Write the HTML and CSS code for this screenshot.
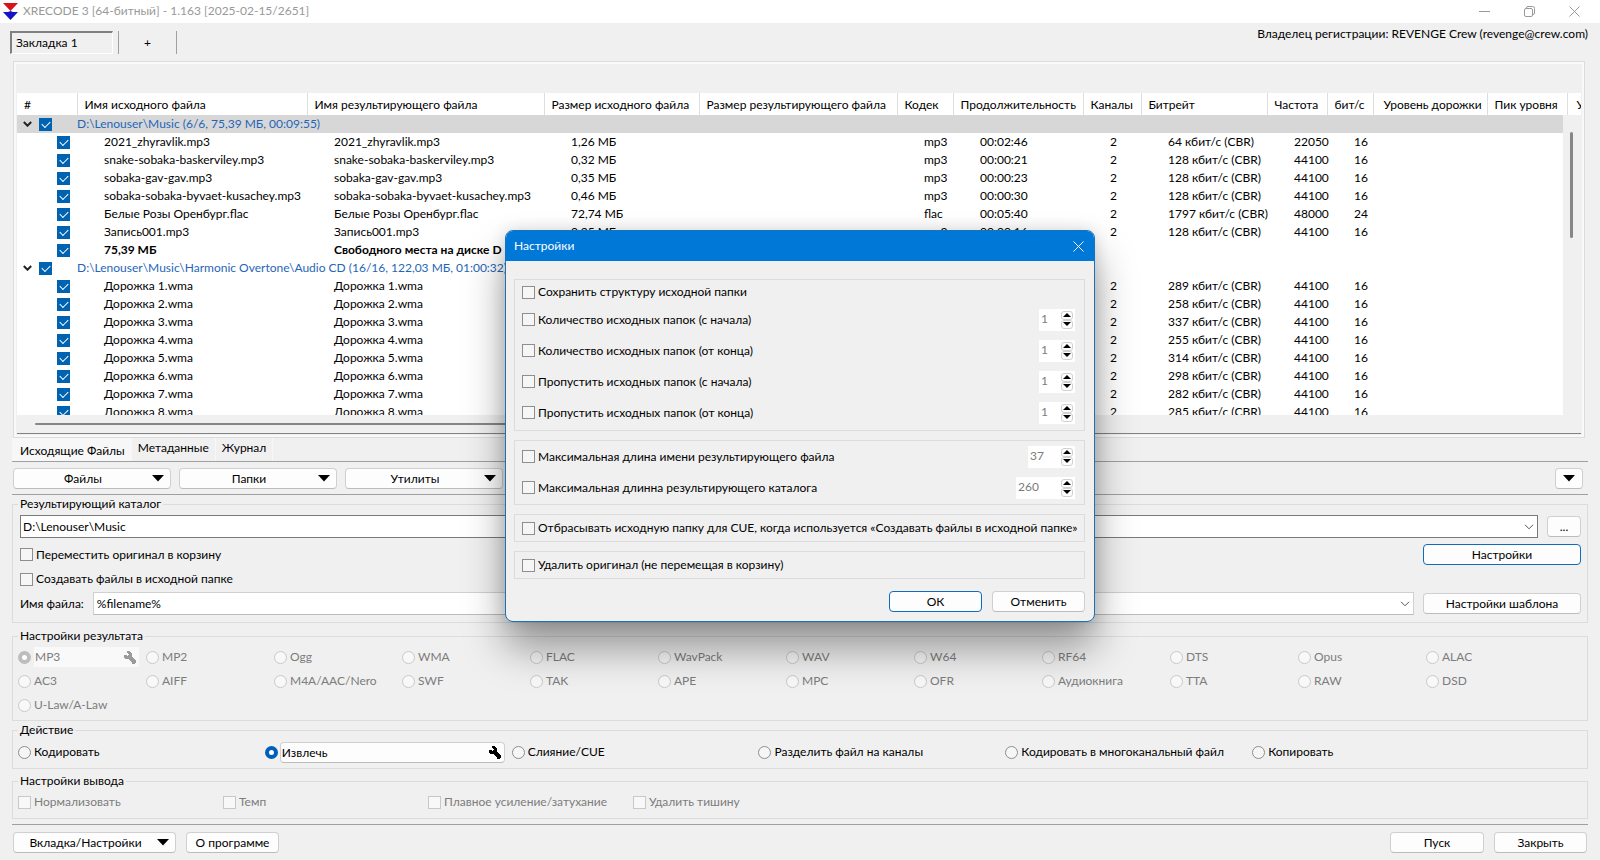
FILE: index.html
```html
<!DOCTYPE html>
<html lang="ru">
<head>
<meta charset="utf-8">
<title>XRECODE 3</title>
<link rel="stylesheet" href="styles.css">
</head>
<body>
<svg class="sprite" aria-hidden="true">
  <symbol id="wrench" viewBox="0 0 14 14"><path d="M4 1h3v1h1v1h1v4h1v1h1v1h1v1h1v3h-1v1h-3v-1H9v-1H8v-1H7v-1H6V9H2V8H1V5h3v1h1V5h1V4H5V3H4z" fill="currentColor"/></symbol>
  <symbol id="chevron" viewBox="0 0 10 6"><path d="M1 .8 5 4.8 9 .8" fill="none" stroke="currentColor" stroke-width="1"/></symbol>
  <symbol id="down" viewBox="0 0 12 7"><path d="M0 0h12L6 6.5z" fill="currentColor"/></symbol>
  <symbol id="small-up" viewBox="0 0 8 4"><path d="M0 4h8L4 0z" fill="currentColor"/></symbol>
  <symbol id="small-down" viewBox="0 0 8 4"><path d="M0 0h8L4 4z" fill="currentColor"/></symbol>
  <symbol id="cross" viewBox="0 0 11 11"><path d="M.5.5l10 10M10.500.5l-10 10" fill="none" stroke="currentColor"/></symbol>
</svg>
<div class="app">
  <header class="titlebar">
    <svg class="logo" viewBox="0 0 15 17"><path d="M0 0h15L7.500 8z" fill="#d8121c"/><path d="M0 9h5L7.500 8 10 9h5L7.500 17z" fill="#1414c8"/></svg>
    <span class="titlebar-text">XRECODE 3 [64-битный] - 1.163 [2025-02-15/2651]</span>
    <div class="window-buttons">
      <button class="plain" aria-label="Свернуть"><svg width="11" height="11"><path d="M0 5.500h11" stroke="currentColor"/></svg></button>
      <button class="plain" aria-label="Развернуть"><svg width="11" height="11" fill="none" stroke="currentColor"><rect x=".5" y="2.500" width="8" height="8" rx="1.500"/><path d="M2.500 2.500V2A1.500 1.500 0 0 1 4 .5h4.500a2 2 0 0 1 2 2V7A1.500 1.500 0 0 1 9 8.500"/></svg></button>
      <button class="plain" aria-label="Закрыть окно"><svg width="11" height="11"><use href="#cross"/></svg></button>
    </div>
  </header>

  <div class="sessions">
    <button class="session">Закладка 1</button>
    <button class="session-add">+</button>
    <span class="owner">Владелец регистрации: REVENGE Crew (revenge@crew.com)</span>
  </div>

  <main class="panel">
    <div class="list">
      <table class="files">
        <colgroup>
          <col class="w-num"><col class="w-src"><col class="w-dst"><col class="w-size"><col class="w-rsize"><col class="w-codec"><col class="w-dur"><col class="w-chan"><col class="w-rate"><col class="w-freq"><col class="w-bits"><col class="w-level"><col class="w-peak"><col>
        </colgroup>
        <thead>
          <tr><th>#</th><th>Имя исходного файла</th><th>Имя результирующего файла</th><th>Размер исходного файла</th><th>Размер результирующего файла</th><th>Кодек</th><th>Продолжительность</th><th>Каналы</th><th>Битрейт</th><th>Частота</th><th>бит/с</th><th class="level">Уровень дорожки</th><th>Пик уровня</th><th>У</th></tr>
        </thead>
        <tbody id="rows"></tbody>
      </table>
      <div class="vscroll"><div class="vthumb"></div></div>
      <div class="hscroll"><div class="hthumb"></div></div>
    </div>
  </main>

  <nav class="tabs">
    <button class="tab tab-on">Исходящие Файлы</button>
    <button class="tab">Метаданные</button>
    <button class="tab">Журнал</button>
  </nav>

  <div class="toolbar">
    <button class="btn menu"><span>Файлы</span><svg class="down"><use href="#down"/></svg></button>
    <button class="btn menu"><span>Папки</span><svg class="down"><use href="#down"/></svg></button>
    <button class="btn menu"><span>Утилиты</span><svg class="down"><use href="#down"/></svg></button>
    <button class="btn more" aria-label="Ещё"><svg class="down"><use href="#down"/></svg></button>
  </div>

  <fieldset class="group target">
    <legend>Результирующий каталог</legend>
    <div class="line">
      <div class="combo combo-dark">
        <select aria-label="Результирующий каталог"><option>D:\Lenouser\Music</option></select>
        <svg class="chevron"><use href="#chevron"/></svg>
      </div>
      <button class="btn browse">...</button>
    </div>
    <div class="line line-move">
      <label class="opt"><input type="checkbox">Переместить оригинал в корзину</label>
      <button class="btn btn-side btn-focus">Настройки</button>
    </div>
    <div class="line line-create"><label class="opt"><input type="checkbox">Создавать файлы в исходной папке</label></div>
    <div class="line line-name">
      <label for="pattern">Имя файла:</label>
      <div class="combo">
        <select id="pattern"><option>%filename%</option></select>
        <svg class="chevron"><use href="#chevron"/></svg>
      </div>
      <button class="btn btn-side">Настройки шаблона</button>
    </div>
  </fieldset>

  <fieldset class="group formats-group">
    <legend>Настройки результата</legend>
    <div class="formats">
      <div class="choice">
        <label class="opt off"><input type="radio" name="format" checked disabled><span class="box-text">MP3</span></label>
        <button class="tool off" disabled aria-label="Настройки MP3"><svg class="wrench"><use href="#wrench"/></svg></button>
      </div>
      <label class="opt off"><input type="radio" name="format" disabled>MP2</label>
      <label class="opt off"><input type="radio" name="format" disabled>Ogg</label>
      <label class="opt off"><input type="radio" name="format" disabled>WMA</label>
      <label class="opt off"><input type="radio" name="format" disabled>FLAC</label>
      <label class="opt off"><input type="radio" name="format" disabled>WavPack</label>
      <label class="opt off"><input type="radio" name="format" disabled>WAV</label>
      <label class="opt off"><input type="radio" name="format" disabled>W64</label>
      <label class="opt off"><input type="radio" name="format" disabled>RF64</label>
      <label class="opt off"><input type="radio" name="format" disabled>DTS</label>
      <label class="opt off"><input type="radio" name="format" disabled>Opus</label>
      <label class="opt off"><input type="radio" name="format" disabled>ALAC</label>
      <label class="opt off"><input type="radio" name="format" disabled>AC3</label>
      <label class="opt off"><input type="radio" name="format" disabled>AIFF</label>
      <label class="opt off"><input type="radio" name="format" disabled>M4A/AAC/Nero</label>
      <label class="opt off"><input type="radio" name="format" disabled>SWF</label>
      <label class="opt off"><input type="radio" name="format" disabled>TAK</label>
      <label class="opt off"><input type="radio" name="format" disabled>APE</label>
      <label class="opt off"><input type="radio" name="format" disabled>MPC</label>
      <label class="opt off"><input type="radio" name="format" disabled>OFR</label>
      <label class="opt off"><input type="radio" name="format" disabled>Аудиокнига</label>
      <label class="opt off"><input type="radio" name="format" disabled>TTA</label>
      <label class="opt off"><input type="radio" name="format" disabled>RAW</label>
      <label class="opt off"><input type="radio" name="format" disabled>DSD</label>
      <label class="opt off"><input type="radio" name="format" disabled>U-Law/A-Law</label>
    </div>
  </fieldset>

  <fieldset class="group actions-group">
    <legend>Действие</legend>
    <div class="actions">
      <label class="opt"><input type="radio" name="action">Кодировать</label>
      <div class="choice choice-on">
        <label class="opt"><input type="radio" name="action" checked><span class="box-text">Извлечь</span></label>
        <button class="tool" aria-label="Настройки извлечения"><svg class="wrench"><use href="#wrench"/></svg></button>
      </div>
      <label class="opt"><input type="radio" name="action">Слияние/CUE</label>
      <label class="opt"><input type="radio" name="action">Разделить файл на каналы</label>
      <label class="opt"><input type="radio" name="action">Кодировать в многоканальный файл</label>
      <label class="opt"><input type="radio" name="action">Копировать</label>
    </div>
  </fieldset>

  <fieldset class="group output-group">
    <legend>Настройки вывода</legend>
    <div class="outputs">
      <label class="opt off"><input type="checkbox" disabled>Нормализовать</label>
      <label class="opt off"><input type="checkbox" disabled>Темп</label>
      <label class="opt off"><input type="checkbox" disabled>Плавное усиление/затухание</label>
      <label class="opt off"><input type="checkbox" disabled>Удалить тишину</label>
    </div>
  </fieldset>

  <footer class="footer">
    <button class="btn menu menu-wide"><span>Вкладка/Настройки</span><svg class="down"><use href="#down"/></svg></button>
    <button class="btn about">О программе</button>
    <button class="btn start">Пуск</button>
    <button class="btn close">Закрыть</button>
  </footer>
</div>

<section class="dialog" role="dialog" aria-labelledby="dialog-title">
  <header class="dialog-head">
    <span id="dialog-title">Настройки</span>
    <button class="plain dialog-close" aria-label="Закрыть"><svg width="11" height="11"><use href="#cross"/></svg></button>
  </header>
  <div class="dialog-body">
    <div class="box box-folders">
      <div class="field field-first"><label class="opt"><input type="checkbox">Сохранить структуру исходной папки</label></div>
      <div class="field"><label class="opt"><input type="checkbox">Количество исходных папок (с начала)</label><div class="spin"><input class="num" value="1" disabled aria-label="Папок с начала"><div class="steps"><button aria-label="Больше"><svg><use href="#small-up"/></svg></button><button aria-label="Меньше"><svg><use href="#small-down"/></svg></button></div></div></div>
      <div class="field"><label class="opt"><input type="checkbox">Количество исходных папок (от конца)</label><div class="spin"><input class="num" value="1" disabled aria-label="Папок от конца"><div class="steps"><button aria-label="Больше"><svg><use href="#small-up"/></svg></button><button aria-label="Меньше"><svg><use href="#small-down"/></svg></button></div></div></div>
      <div class="field"><label class="opt"><input type="checkbox">Пропустить исходных папок (с начала)</label><div class="spin"><input class="num" value="1" disabled aria-label="Пропустить с начала"><div class="steps"><button aria-label="Больше"><svg><use href="#small-up"/></svg></button><button aria-label="Меньше"><svg><use href="#small-down"/></svg></button></div></div></div>
      <div class="field"><label class="opt"><input type="checkbox">Пропустить исходных папок (от конца)</label><div class="spin"><input class="num" value="1" disabled aria-label="Пропустить от конца"><div class="steps"><button aria-label="Больше"><svg><use href="#small-up"/></svg></button><button aria-label="Меньше"><svg><use href="#small-down"/></svg></button></div></div></div>
    </div>
    <div class="box box-length">
      <div class="field"><label class="opt"><input type="checkbox">Максимальная длина имени результирующего файла</label><div class="spin spin-2"><input class="num" value="37" disabled aria-label="Длина имени"><div class="steps"><button aria-label="Больше"><svg><use href="#small-up"/></svg></button><button aria-label="Меньше"><svg><use href="#small-down"/></svg></button></div></div></div>
      <div class="field"><label class="opt"><input type="checkbox">Максимальная длинна результирующего каталога</label><div class="spin spin-3"><input class="num" value="260" disabled aria-label="Длина каталога"><div class="steps"><button aria-label="Больше"><svg><use href="#small-up"/></svg></button><button aria-label="Меньше"><svg><use href="#small-down"/></svg></button></div></div></div>
    </div>
    <div class="box box-single"><label class="opt"><input type="checkbox">Отбрасывать исходную папку для CUE, когда используется «Создавать файлы в исходной папке»</label></div>
    <div class="box box-single"><label class="opt"><input type="checkbox">Удалить оригинал (не перемещая в корзину)</label></div>
    <div class="dialog-buttons">
      <button class="btn btn-focus">ОК</button>
      <button class="btn">Отменить</button>
    </div>
  </div>
</section>
<script src="script.js"></script>
</body>
</html>
```

FILE: styles.css
```css
* { box-sizing: border-box; }

body {
  margin: 0;
  background: #f0f0f0;
  color: #000;
  font: 12px/18px Lato, "Noto Sans", sans-serif;
}

button, input, select {
  font: inherit;
  color: inherit;
  margin: 0;
}

button { padding: 0; }

.sprite { position: absolute; width: 0; height: 0; }

.app {
  display: flex;
  flex-direction: column;
  height: 100vh;
  min-height: 720px;
  overflow: hidden;
}

.plain { border: 0; background: none; display: flex; }

/* Title bar */
.titlebar {
  display: flex;
  align-items: center;
  height: 23px;
  padding: 0 20px 1px 3px;
  background: #fff;
  color: #999;
}
.logo { width: 15px; height: 17px; margin-right: 5px; }
.window-buttons { display: flex; gap: 34px; margin-left: auto; }

/* Sessions */
.sessions {
  display: flex;
  align-items: flex-start;
  height: 38px;
  padding: 8px 12px 0 10px;
}
.session {
  width: 103px;
  height: 23px;
  padding: 0 4px;
  text-align: left;
  background: #f0f0f0;
  border: 2px solid;
  border-color: #808080 #fff #fff #808080;
  border-right-width: 1px;
  border-bottom-width: 1px;
}
.session-add {
  width: 59px;
  height: 23px;
  margin-left: 5px;
  background: none;
  border: 0;
  border-left: 1px solid #a0a0a0;
  border-right: 1px solid #a0a0a0;
}
.owner { margin: -6px 0 0 auto; }

/* File list */
.panel {
  flex: 1;
  min-height: 0;
  display: flex;
  margin: 0 15px 0 13px;
  padding: 28px 3px 3px;
  border: 1px solid #dcdcdc;
  box-shadow: inset 0 0 0 2px #f9f9f9;
}
.list {
  position: relative;
  flex: 1;
  margin-top: 3px;
  overflow: hidden;
  background: #fff;
  border-bottom: 1px solid #828282;
}
.files {
  width: 100%;
  table-layout: fixed;
  border-collapse: collapse;
}
.w-num { width: 60px; }
.w-src { width: 230px; }
.w-dst { width: 237px; }
.w-size { width: 155px; }
.w-rsize { width: 198px; }
.w-codec { width: 56px; }
.w-dur { width: 130px; }
.w-chan { width: 58px; }
.w-rate { width: 126px; }
.w-freq { width: 60px; }
.w-bits { width: 46px; }
.w-level { width: 114px; }
.w-peak { width: 80px; }
.files th {
  height: 22px;
  padding: 1px 0 0 7px;
  font-weight: normal;
  text-align: left;
  white-space: nowrap;
  overflow: hidden;
  border-right: 1px solid #dedede;
}
.files th.level { padding-left: 10px; }
.files th:last-child { border-right: 0; padding-left: 9px; }
.files td {
  height: 18px;
  padding: 0 0 0 27px;
  line-height: 18px;
  white-space: nowrap;
}
.files td:first-child { padding: 0; }
.files .group-name { padding-left: 0; color: #1f66b8; }
.files .selected { background: #d7d7d7; }
.files .total { font-weight: bold; }
.tree { display: flex; align-items: center; height: 18px; padding-left: 40px; }
.tree-group { padding-left: 6px; gap: 7px; }
.tree-group svg { width: 9px; height: 6px; color: #222; }
.tree-group svg path { stroke-width: 2; }
.vscroll {
  position: absolute;
  top: 22px;
  right: 0;
  bottom: 0;
  width: 18px;
  padding: 17px 8px 0 7px;
  background: #f0f0f0;
}
.vthumb { height: 106px; background: #868686; border-radius: 2px; }
.hscroll {
  position: absolute;
  left: 0;
  right: 0;
  bottom: 0;
  height: 18px;
  padding: 8px 200px 0 18px;
  background: #f0f0f0;
}
.hthumb { width: 900px; height: 2px; background: #868686; border-radius: 1px; }

/* Page tabs */
.tabs {
  display: flex;
  height: 24px;
  margin: 0 12px;
  border-bottom: 1px solid #a0a0a0;
}
.tab {
  padding: 0 6px 3px;
  background: none;
  border: 0;
  border-right: 1px solid #f7f7f7;
}
.tab-on { padding: 2px 6px 0 8px; background: #f7f7f7; }

/* Buttons */
.btn {
  display: flex;
  align-items: center;
  justify-content: center;
  height: 21px;
  background: #fdfdfd;
  border: 1px solid #d0d0d0;
  border-bottom-color: #bcbcbc;
  border-radius: 4px;
}
.btn-focus { border-color: #0f6cbd; }
.menu { width: 158px; padding-right: 6px; }
.menu span { flex: 1; }
.down { width: 12px; height: 7px; }
.more { width: 28px; margin-left: auto; }

.toolbar {
  display: flex;
  gap: 8px;
  height: 33px;
  margin: 0 12px;
  padding: 6px 5px 0 1px;
  border-bottom: 1px solid #a0a0a0;
}

/* Groups */
.group {
  min-width: 0;
  margin: 0 12px;
  padding: 0 6px;
  border: 1px solid #dcdcdc;
}
.group legend { padding: 0 2px; }
.target legend { margin-left: -2px; }
.target { padding: 2px 6px 7px 7px; }
.formats-group { margin-top: 4px; padding: 0 33px 3px 5px; }
.actions-group { padding: 2px 88px 5px 5px; }
.output-group { margin-top: 3px; padding: 0 5px 4px; }

.line { display: flex; align-items: center; gap: 9px; }
.line-move { margin-top: 6px; justify-content: space-between; }
.line-create { margin-top: 5px; height: 18px; }
.line-name { margin-top: 4px; }

.combo { position: relative; flex: 1; height: 23px; }
.combo select {
  appearance: none;
  width: 100%;
  height: 23px;
  padding: 0 24px 0 3px;
  background: #fff;
  border: 1px solid #d0d0d0;
  border-bottom-color: #bcbcbc;
  border-radius: 0;
}
.combo-dark select { padding-left: 2px; border-color: #7a7a7a; }
.combo .chevron {
  position: absolute;
  right: 4px;
  top: 9px;
  width: 10px;
  height: 6px;
  color: #555;
  pointer-events: none;
}
.browse { width: 34px; }
.btn-side { width: 158px; }

.opt { display: flex; align-items: center; gap: 3px; white-space: nowrap; }
.off { color: #7c7c7c; }

input[type="checkbox"], input[type="radio"] {
  appearance: none;
  flex: none;
  width: 13px;
  height: 13px;
  background: #f6f6f6;
  border: 1px solid #8e8e8e;
}
input[type="radio"] { border-radius: 50%; }
input[type="checkbox"]:disabled, input[type="radio"]:disabled { border-color: #c8c8c8; background: #f8f8f8; }
input[type="radio"]:checked { border: 4px solid #005fb8; background: #fff; }
input[type="radio"]:checked:disabled { border-color: #bdbdbd; }
.tree input[type="checkbox"] { position: relative; background: #0063b1; border-color: #0063b1; }
.tree input[type="checkbox"]::before {
  content: "";
  position: absolute;
  left: 2px;
  top: 2px;
  width: 7px;
  height: 4px;
  border-left: 1px solid #fff;
  border-bottom: 1px solid #fff;
  transform: rotate(-45deg);
}

.formats {
  display: grid;
  grid-template-columns: repeat(12, 1fr);
  grid-auto-rows: 24px;
}
.actions {
  display: grid;
  grid-template-columns: repeat(6, 1fr);
  grid-auto-rows: 22px;
}
.outputs {
  display: grid;
  grid-template-columns: repeat(4, 205px);
  grid-auto-rows: 24px;
}
.choice {
  display: flex;
  align-items: center;
  margin-right: 7px;
}
.choice .opt { flex: 1; gap: 3px; }
.choice .box-text { flex: 1; height: 20px; line-height: 20px; padding-left: 1px; background: #f9f9f9; }
.tool { display: flex; align-items: center; height: 20px; padding-right: 2px; background: #f9f9f9; border: 0; }
.off.tool { color: #9a9a9a; }
.wrench { width: 14px; height: 14px; }
.choice-on .opt { gap: 2px; }
.choice-on .box-text {
  background: #fdfdfd;
  border: 1px solid #d0d0d0;
  border-right: 0;
  border-bottom-color: #bcbcbc;
  border-radius: 4px 0 0 4px;
  height: 21px;
}
.choice-on .tool {
  height: 21px;
  background: #fdfdfd;
  border: 1px solid #d0d0d0;
  border-left: 0;
  border-bottom-color: #bcbcbc;
  border-radius: 0 4px 4px 0;
}

/* Footer */
.footer {
  display: flex;
  margin: 5px 12px 0;
  padding: 7px 1px;
  border-top: 1px solid #a0a0a0;
}
.menu-wide { width: 163px; }
.about { width: 93px; margin-left: 10px; }
.start { width: 94px; margin-left: auto; }
.close { width: 93px; margin-left: 10px; }

/* Dialog */
.dialog {
  position: absolute;
  top: 230px;
  left: 0;
  right: 0;
  width: 590px;
  margin: 0 auto;
  background: #f0f0f0;
  border: 1px solid #1873b8;
  border-radius: 8px;
  box-shadow: 0 26px 40px rgba(0, 0, 0, 0.38), 0 0 16px rgba(0, 0, 0, 0.14);
}
.dialog-head {
  display: flex;
  align-items: center;
  justify-content: space-between;
  height: 30px;
  padding: 0 10px 0 8px;
  background: #0078d7;
  color: #fff;
  border-radius: 7px 7px 0 0;
}
.dialog-body {
  display: flex;
  flex-direction: column;
  gap: 9px;
  padding: 18px 9px 9px 8px;
}
.box { padding: 0 9px 0 7px; border: 1px solid #dcdcdc; }
.box-folders { padding-bottom: 2px; }
.box-length { padding-bottom: 1px; }
.box-single { padding-top: 4px; padding-bottom: 4px; }
.field { display: flex; align-items: center; justify-content: space-between; height: 31px; }
.field-first { height: 24px; }
.spin { display: flex; width: 36px; height: 22px; padding: 0 2px; background: #fff; }
.spin-2 { width: 47px; }
.spin-3 { width: 59px; }
.num { flex: 1; min-width: 0; height: 20px; padding: 0; border: 0; }
.num:disabled { background: #fff; color: #7c7c7c; }
.steps { display: flex; flex-direction: column; justify-content: center; width: 12px; }
.steps button {
  display: flex;
  align-items: center;
  justify-content: center;
  height: 9px;
  background: #fdfdfd;
  border: 1px solid #d0d0d0;
  border-radius: 3px;
}
.steps svg { flex: none; width: 8px; height: 4px; }
.dialog-buttons { display: flex; justify-content: flex-end; gap: 10px; padding-top: 3px; }
.dialog-buttons .btn { width: 93px; }
```

FILE: script.js
```js
const rate = (n) => n + " кбит/с (CBR)";

const groups = [
  {
    title: "D:\\Lenouser\\Music (6/6, 75,39 МБ, 00:09:55)",
    selected: true,
    files: [
      ["2021_zhyravlik.mp3", "1,26 МБ", "mp3", "00:02:46", rate(64), "22050", "16"],
      ["snake-sobaka-baskerviley.mp3", "0,32 МБ", "mp3", "00:00:21", rate(128), "44100", "16"],
      ["sobaka-gav-gav.mp3", "0,35 МБ", "mp3", "00:00:23", rate(128), "44100", "16"],
      ["sobaka-sobaka-byvaet-kusachey.mp3", "0,46 МБ", "mp3", "00:00:30", rate(128), "44100", "16"],
      ["Белые Розы Оренбург.flac", "72,74 МБ", "flac", "00:05:40", rate(1797), "48000", "24"],
      ["Запись001.mp3", "0,25 МБ", "mp3", "00:00:16", rate(128), "44100", "16"]
    ],
    total: ["75,39 МБ", "Свободного места на диске D"]
  },
  {
    title: "D:\\Lenouser\\Music\\Harmonic Overtone\\Audio CD (16/16, 122,03 МБ, 01:00:32)",
    files: [289, 258, 337, 255, 314, 298, 282, 285].map((n, i) =>
      ["Дорожка " + (i + 1) + ".wma", "", "", "", rate(n), "44100", "16"])
  }
];

const body = document.getElementById("rows");

function addRow(className, treeClass, tree, cells) {
  const tr = document.createElement("tr");
  tr.className = className;
  tr.innerHTML = `<td><div class="tree ${treeClass}">${tree}</div></td>` + cells;
  body.append(tr);
}

const tick = (name) => `<input type="checkbox" checked aria-label="${name}">`;
const arrow = '<svg viewBox="0 0 9 6"><path d="M.8 1 4.500 4.700 8.200 1" fill="none" stroke="currentColor"/></svg>';

for (const g of groups) {
  addRow(g.selected ? "selected" : "", "tree-group", arrow + tick(g.title),
    `<td class="group-name" colspan="13">${g.title}</td>`);
  for (const [name, size, codec, time, bitrate, freq, bits] of g.files) {
    const cells = [name, name, size, "", codec, time, "2", bitrate, freq, bits, "", "", ""];
    addRow("", "", tick(name), cells.map((c) => `<td>${c}</td>`).join(""));
  }
  if (g.total) {
    addRow("total", "", tick("Итого"), g.total.map((c) => `<td>${c}</td>`).join("") + '<td colspan="11"></td>');
  }
}
```
